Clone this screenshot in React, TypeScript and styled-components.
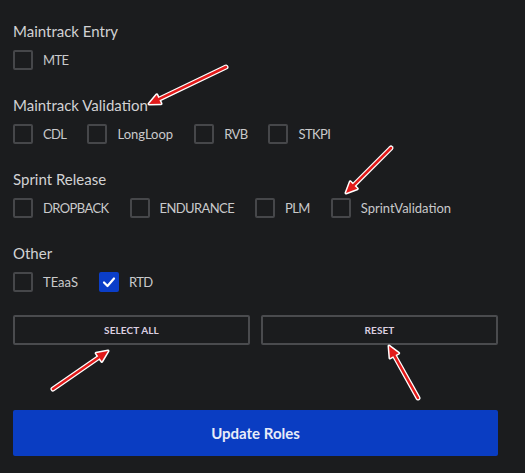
import React, { useState } from "react";
import styled, { createGlobalStyle } from "styled-components";

const Global = createGlobalStyle`
  html, body { margin: 0; padding: 0; background: #1b1c1e; }
  body { font-family: Lato, "Noto Sans", sans-serif; }
`;

const Page = styled.div`
  position: relative;
  width: 525px;
  height: 473px;
  background: #1b1c1e;
  box-sizing: border-box;
  padding: 21px 27px 0 13px;
  overflow: hidden;
`;

const Section = styled.div`
  display: flex;
  flex-direction: column;
  gap: 9px;
  margin-bottom: 25px;
`;

const Heading = styled.div`
  font-size: 15px;
  line-height: 20px;
  color: #d2d2d4;
`;

const Row = styled.div`
  display: flex;
  align-items: center;
  gap: 21px;
  height: 20px;
`;

const Item = styled.label`
  display: flex;
  align-items: center;
  gap: 10px;
  cursor: pointer;
`;

const Box = styled.span<{ $checked: boolean }>`
  box-sizing: border-box;
  width: 20px;
  height: 20px;
  border-radius: 2px;
  border: 2px solid ${(p) => (p.$checked ? "#0b3ec8" : "#46474a")};
  background: ${(p) => (p.$checked ? "#0b3ec8" : "transparent")};
  display: flex;
  align-items: center;
  justify-content: center;
`;

const Label = styled.span<{ $caps: boolean }>`
  font-size: 13px;
  color: #c9c9cb;
  line-height: 20px;
  letter-spacing: ${(p) => (p.$caps ? "-0.6px" : "0")};
`;

const ButtonRow = styled.div`
  display: grid;
  grid-template-columns: 1fr 1fr;
  gap: 11px;
  margin-top: -2px;
`;

const OutlineButton = styled.button`
  box-sizing: border-box;
  height: 30px;
  background: transparent;
  border: 2px solid #4a4b4e;
  border-radius: 2px;
  color: #dccfe0;
  font-family: Lato, "Noto Sans", sans-serif;
  font-size: 10px;
  font-weight: 700;
  letter-spacing: 0.1px;
`;

const PrimaryButton = styled.button`
  box-sizing: border-box;
  width: 100%;
  height: 46px;
  margin-top: 65px;
  background: #0a3dc2;
  border: none;
  border-radius: 2px;
  color: #e8ecf8;
  font-family: Lato, "Noto Sans", sans-serif;
  font-size: 15px;
  font-weight: 700;
`;

const Overlay = styled.svg`
  position: absolute;
  left: 0;
  top: 0;
  pointer-events: none;
`;

const groups: { title: string; items: string[] }[] = [
  { title: "Maintrack Entry", items: ["MTE"] },
  { title: "Maintrack Validation", items: ["CDL", "LongLoop", "RVB", "STKPI"] },
  { title: "Sprint Release", items: ["DROPBACK", "ENDURANCE", "PLM", "SprintValidation"] },
  { title: "Other", items: ["TEaaS", "RTD"] },
];

const Arrow = ({ x1, y1, x2, y2 }: { x1: number; y1: number; x2: number; y2: number }) => {
  const dx = x2 - x1;
  const dy = y2 - y1;
  const len = Math.hypot(dx, dy);
  const ux = dx / len;
  const uy = dy / len;
  const hl = 11;
  const hw = 5;
  const bx = x2 - ux * hl;
  const by = y2 - uy * hl;
  const head = `${x2},${y2} ${bx - uy * hw},${by + ux * hw} ${bx + uy * hw},${by - ux * hw}`;
  return (
    <g>
      <line x1={x1} y1={y1} x2={bx} y2={by} stroke="#ffffff" strokeWidth={5} strokeLinecap="round" />
      <polygon points={head} fill="#ffffff" stroke="#ffffff" strokeWidth={3} strokeLinejoin="round" />
      <line x1={x1} y1={y1} x2={bx} y2={by} stroke="#e21a1a" strokeWidth={2.5} strokeLinecap="round" />
      <polygon points={head} fill="#e21a1a" />
    </g>
  );
};

export default function App() {
  const [checked, setChecked] = useState<Record<string, boolean>>({ RTD: true });
  return (
    <Page>
      <Global />
      {groups.map((g) => (
        <Section key={g.title}>
          <Heading>{g.title}</Heading>
          <Row>
            {g.items.map((it) => (
              <Item key={it} onClick={() => setChecked((c) => ({ ...c, [it]: !c[it] }))}>
                <Box $checked={!!checked[it]}>
                  {checked[it] && (
                    <svg width="14" height="14" viewBox="0 0 14 14">
                      <path d="M2 7.5 L5.5 11 L12 3.5" fill="none" stroke="#fff" strokeWidth="2.2" strokeLinecap="round" strokeLinejoin="round" />
                    </svg>
                  )}
                </Box>
                <Label $caps={it === it.toUpperCase()}>{it}</Label>
              </Item>
            ))}
          </Row>
        </Section>
      ))}
      <ButtonRow>
        <OutlineButton>SELECT ALL</OutlineButton>
        <OutlineButton>RESET</OutlineButton>
      </ButtonRow>
      <PrimaryButton>Update Roles</PrimaryButton>
      <Overlay width="525" height="473">
        <Arrow x1={226} y1={67} x2={149} y2={104} />
        <Arrow x1={391} y1={148} x2={346} y2={193} />
        <Arrow x1={53} y1={389} x2={108} y2={351} />
        <Arrow x1={418} y1={398} x2={389} y2={346} />
      </Overlay>
    </Page>
  );
}
